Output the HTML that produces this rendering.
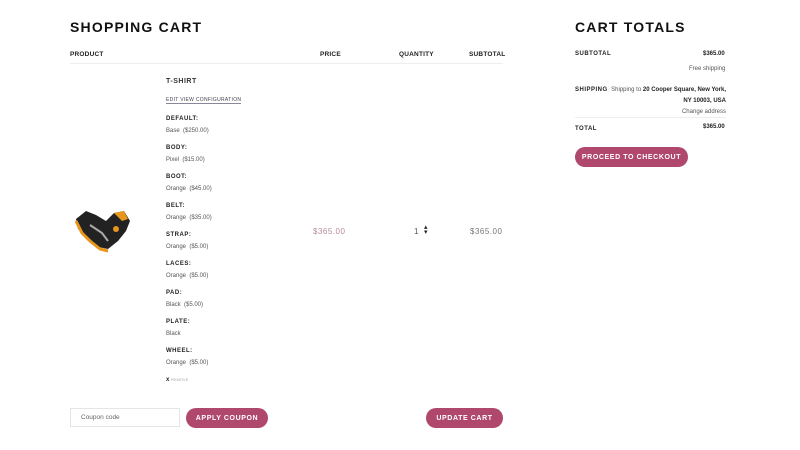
<!DOCTYPE html>
<html><head><meta charset="utf-8"><style>
body{margin:0;width:800px;height:450px;background:#fff;font-family:"Liberation Sans",sans-serif;position:relative;overflow:hidden;color:#222}
.a{position:absolute;white-space:nowrap}
h1{position:absolute;margin:0;font-size:14px;font-weight:bold;letter-spacing:1.2px;color:#111}
.th{font-size:6.5px;font-weight:bold;letter-spacing:.2px;color:#222}
.lb{font-size:6px;font-weight:bold;letter-spacing:.5px;color:#222}
.v{font-size:6px;color:#555}
.btn{position:absolute;background:#b0486e;color:#fff;border-radius:11px;font-size:7px;font-weight:bold;letter-spacing:.6px;display:flex;align-items:center;justify-content:center;height:20px}
</style></head><body>
<h1 style="left:70px;top:19px">SHOPPING CART</h1>
<h1 style="left:575px;top:19px">CART TOTALS</h1>
<div class="a th" style="left:70px;top:51px">PRODUCT</div>
<div class="a th" style="left:320px;top:51px">PRICE</div>
<div class="a th" style="left:399px;top:51px">QUANTITY</div>
<div class="a th" style="left:469px;top:51px">SUBTOTAL</div>
<div class="a" style="left:70px;top:63px;width:433px;height:1px;background:#eee"></div>
<div class="a" style="left:166px;top:78px;font-size:7px;font-weight:bold;letter-spacing:.5px;color:#333">T-SHIRT</div>
<div class="a" style="left:166px;top:97px;font-size:5px;letter-spacing:.3px;color:#445;border-bottom:1px solid #889">EDIT VIEW CONFIGURATION</div>
<div class="a lb" style="left:166px;top:116px">DEFAULT:</div><div class="a v" style="left:166px;top:128px">Base &nbsp;($250.00)</div>
<div class="a lb" style="left:166px;top:145px">BODY:</div><div class="a v" style="left:166px;top:157px">Pixel &nbsp;($15.00)</div>
<div class="a lb" style="left:166px;top:174px">BOOT:</div><div class="a v" style="left:166px;top:186px">Orange &nbsp;($45.00)</div>
<div class="a lb" style="left:166px;top:203px">BELT:</div><div class="a v" style="left:166px;top:215px">Orange &nbsp;($35.00)</div>
<div class="a lb" style="left:166px;top:232px">STRAP:</div><div class="a v" style="left:166px;top:244px">Orange &nbsp;($5.00)</div>
<div class="a lb" style="left:166px;top:261px">LACES:</div><div class="a v" style="left:166px;top:273px">Orange &nbsp;($5.00)</div>
<div class="a lb" style="left:166px;top:290px">PAD:</div><div class="a v" style="left:166px;top:302px">Black &nbsp;($5.00)</div>
<div class="a lb" style="left:166px;top:319px">PLATE:</div><div class="a v" style="left:166px;top:331px">Black</div>
<div class="a lb" style="left:166px;top:348px">WHEEL:</div><div class="a v" style="left:166px;top:360px">Orange &nbsp;($5.00)</div>
<div class="a" style="left:166px;top:377px;font-size:6px;font-weight:bold">x <span style="font-size:4px;color:#aaa;font-weight:normal">REMOVE</span></div>
<svg class="a" style="left:72px;top:207px" width="60" height="48" viewBox="0 0 60 48">
<path d="M4 12 L14 4 L24 8 L34 14 L42 6 L52 4 L58 14 L54 24 L46 34 L36 42 L26 40 L16 30 L6 22 Z" fill="#222"/>
<path d="M4 14 L10 26 L18 34 L28 42 L36 44" stroke="#e8951c" stroke-width="3" fill="none"/>
<path d="M42 6 L52 4 L56 12 L50 14 Z" fill="#e8951c"/>
<path d="M18 18 L30 26 L36 34" stroke="#aaa" stroke-width="2" fill="none"/>
<circle cx="44" cy="22" r="3" fill="#e8951c"/>
</svg>
<div class="a" style="left:313px;top:227px;font-size:8px;color:#b78aa0;letter-spacing:.5px">$365.00</div>
<div class="a" style="left:414px;top:227px;font-size:8px;color:#555">1</div>
<div class="a" style="left:424px;top:225px;font-size:7px;line-height:5px;color:#222">▴<br>▾</div>
<div class="a" style="left:470px;top:227px;font-size:8px;color:#777;letter-spacing:.5px">$365.00</div>
<div class="a" style="left:70px;top:408px;height:19px;border:1px solid #e5e5e5;font-size:6.5px;color:#666;line-height:17px;padding-left:10px;box-sizing:border-box;width:110px">Coupon code</div>
<div class="btn" style="left:186px;top:408px;width:82px">APPLY COUPON</div>
<div class="btn" style="left:426px;top:408px;width:77px">UPDATE CART</div>
<div class="a lb" style="left:575px;top:51px">SUBTOTAL</div>
<div class="a" style="left:703px;top:51px;font-size:6px;font-weight:bold">$365.00</div>
<div class="a v" style="left:689px;top:66px">Free shipping</div>
<div class="a lb" style="left:575px;top:87px">SHIPPING</div>
<div class="a v" style="right:74px;top:85px;text-align:right;line-height:11px">Shipping to <b style="color:#222">20 Cooper Square, New York,</b><br><b style="color:#222">NY 10003, USA</b><br>Change address</div>
<div class="a" style="left:575px;top:117px;width:151px;height:1px;background:#eee"></div>
<div class="a lb" style="left:575px;top:126px">TOTAL</div>
<div class="a" style="left:703px;top:124px;font-size:6px;font-weight:bold">$365.00</div>
<div class="btn" style="left:575px;top:147px;width:113px">PROCEED TO CHECKOUT</div>
</body></html>
